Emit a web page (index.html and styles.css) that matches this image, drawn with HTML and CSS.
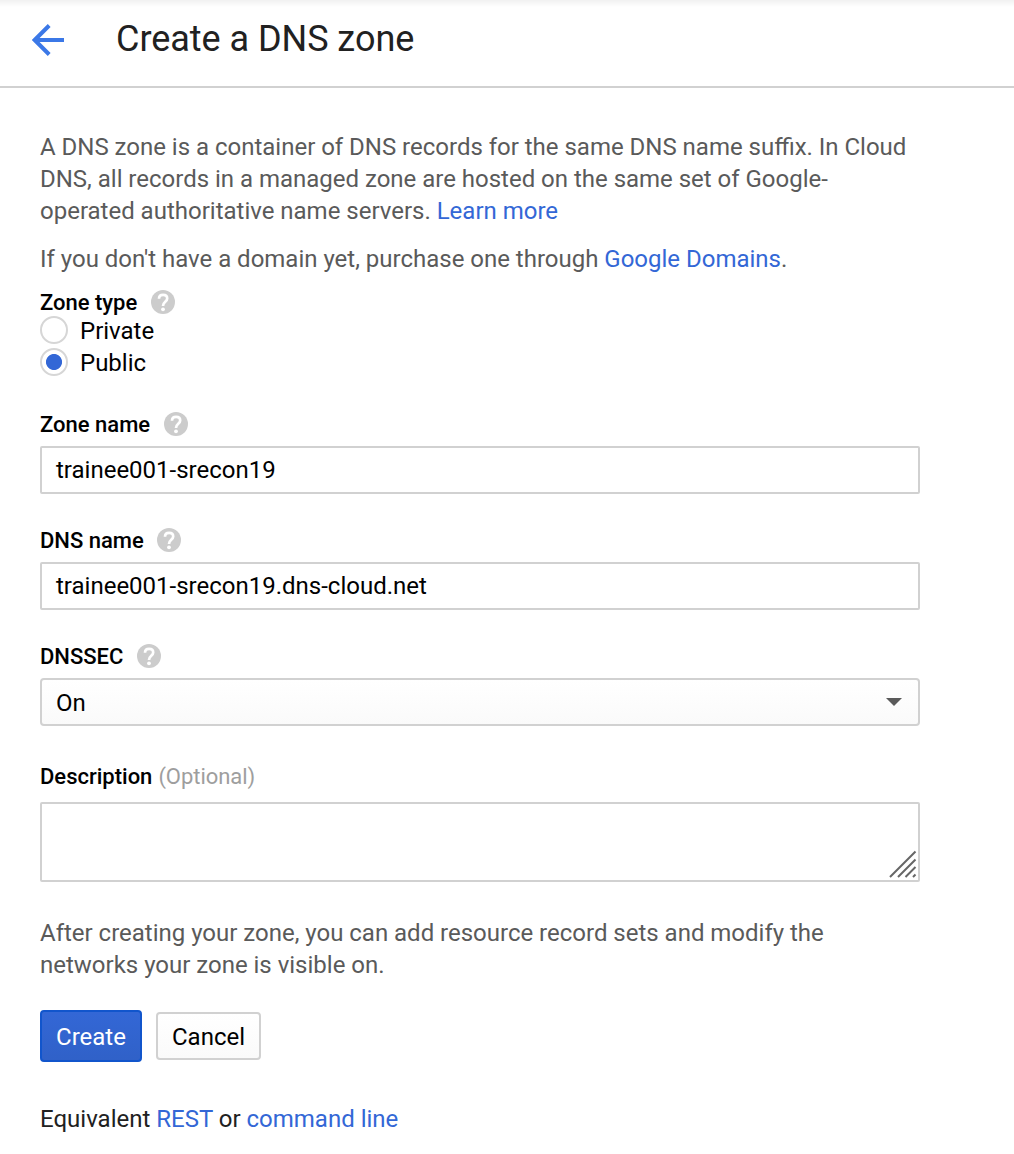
FILE: index.html
```html
<!DOCTYPE html>
<html lang="en">
<head>
<meta charset="utf-8">
<title>Create a DNS zone</title>
<link rel="stylesheet" href="styles.css">
</head>
<body>
<svg class="sprite" aria-hidden="true">
  <symbol id="help" viewBox="0 0 24 24">
    <circle cx="12" cy="12" r="12"/>
    <path d="M8 8.700C8 6.300 9.700 4.900 12.100 4.900s4.100 1.400 4.100 3.700c0 3.200-4.200 3.400-4.200 7.300" fill="none" stroke="#fff" stroke-width="2.700"/>
    <circle cx="12" cy="19.300" r="1.900" fill="#fff"/>
  </symbol>
</svg>
<header class="header">
  <svg class="back" viewBox="0 0 32 32"><path d="M32 16H3M17.200 1.500L2.700 16l14.500 14.500"/></svg>
  <h1 class="title">Create a DNS zone</h1>
</header>
<main class="content">
  <p class="text intro">A DNS zone is a container of DNS records for the same DNS name suffix. In Cloud DNS, all records in a managed zone are hosted on the same set of Google-operated authoritative name servers. <a class="link" href="#">Learn more</a></p>
  <p class="text domain">If you don't have a domain yet, purchase one through <a class="link" href="#">Google Domains</a>.</p>

  <div class="label zone-type">Zone type<svg class="help"><use href="#help"/></svg></div>
  <div class="option"><span class="radio"></span>Private</div>
  <div class="option"><span class="radio checked"></span>Public</div>

  <div class="field first">
    <div class="label">Zone name<svg class="help"><use href="#help"/></svg></div>
    <div class="box">trainee001-srecon19</div>
  </div>
  <div class="field">
    <div class="label">DNS name<svg class="help"><use href="#help"/></svg></div>
    <div class="box">trainee001-srecon19.dns-cloud.net</div>
  </div>
  <div class="field">
    <div class="label">DNSSEC<svg class="help"><use href="#help"/></svg></div>
    <div class="box select">On<svg class="caret" viewBox="0 0 16 8"><path d="M0 0h16L8 8z"/></svg></div>
  </div>
  <div class="field description">
    <div class="label">Description <span class="optional">(Optional)</span></div>
    <div class="box area"><svg class="grip" viewBox="0 0 28 28"><path d="M1 27L26.500 1.500M9 27L26.500 9.500M16.500 27l10-10M24 27l2.500-2.500"/></svg></div>
  </div>

  <p class="text note">After creating your zone, you can add resource record sets and modify the networks your zone is visible on.</p>
  <div class="actions">
    <button class="button primary">Create</button>
    <button class="button">Cancel</button>
  </div>
  <p class="text equivalent">Equivalent <a class="link" href="#">REST</a> or <a class="link" href="#">command line</a></p>
</main>
</body>
</html>
```

FILE: styles.css
```css
* { box-sizing: border-box; }
body {
  margin: 0;
  min-height: 1154px;
  background: #fff;
  color: #000;
  font: 24px/32px Roboto, "Liberation Sans", sans-serif;
}
.sprite { position: absolute; width: 0; height: 0; }
.header {
  display: flex;
  align-items: center;
  height: 88px;
  padding: 0 32px 6px;
  border-bottom: 2px solid #d1d1d1;
  background: linear-gradient(#f1f1f1, #fff 7px);
}
.back { width: 32px; height: 32px; fill: none; stroke: #3b78e7; stroke-width: 4; }
.title { margin: -2px 0 0 52px; font-size: 36px; line-height: 44px; font-weight: 400; letter-spacing: -.04px; color: #212121; }
.content { width: 920px; padding: 43px 0 0 40px; }
.text { margin: 0; color: #5a5a5a; word-spacing: -.06px; }
.link { color: #3367d6; text-decoration: none; }
.domain { margin-top: 16px; }
.label { display: flex; align-items: center; height: 28px; padding-top: 2px; font-size: 22px; font-weight: 500; line-height: 26px; }
.zone-type { margin-top: 13px; }
.help { width: 24px; height: 24px; margin: -2px 0 0 13.600px; fill: #ccc; }
.option { display: flex; align-items: center; height: 32px; }
.zone-type + .option { margin-top: -1px; }
.radio { width: 28px; height: 28px; margin: -2px 12px 0 0; border: 2px solid #d6d6d6; border-radius: 50%; }
.checked { background: radial-gradient(circle, #3367d6 7.600px, #fff 8.400px); }
.field { margin-top: 32px; }
.first { margin-top: 31px; }
.box {
  display: flex;
  align-items: center;
  justify-content: space-between;
  height: 48px;
  margin-top: 8px;
  padding: 0 14px;
  border: 2px solid #d1d1d1;
  border-radius: 2px;
}
.select { padding-top: 2px; border-radius: 4px; background: linear-gradient(#fff, #fafafa); }
.caret { width: 16px; height: 8px; margin: -2px 2px 0 0; fill: #5a5a5a; }
.description { margin-top: 36px; }
.optional { margin-left: 6px; color: #9e9e9e; font-weight: 400; letter-spacing: -.04px; }
.area { height: 80px; margin-top: 12px; padding: 0; align-items: flex-end; justify-content: flex-end; }
.grip { width: 28px; height: 28px; margin: 0 1px 2px 0; fill: none; stroke: #666; stroke-width: 2; }
.note { margin-top: 35px; }
.actions { display: flex; align-items: center; gap: 14px; margin-top: 29px; }
.button {
  width: 105px;
  height: 48px;
  padding: 2px 0 0;
  border: 2px solid #d1d1d1;
  border-radius: 4px;
  background: linear-gradient(#fff, #fafafa);
  color: #000;
  font: inherit;
}
.primary { width: 102px; height: 52px; border-color: #1155cc; background: linear-gradient(#3367d6, #3061c8); color: #fff; }
.equivalent { margin-top: 41px; color: #212121; word-spacing: 0; }
```
